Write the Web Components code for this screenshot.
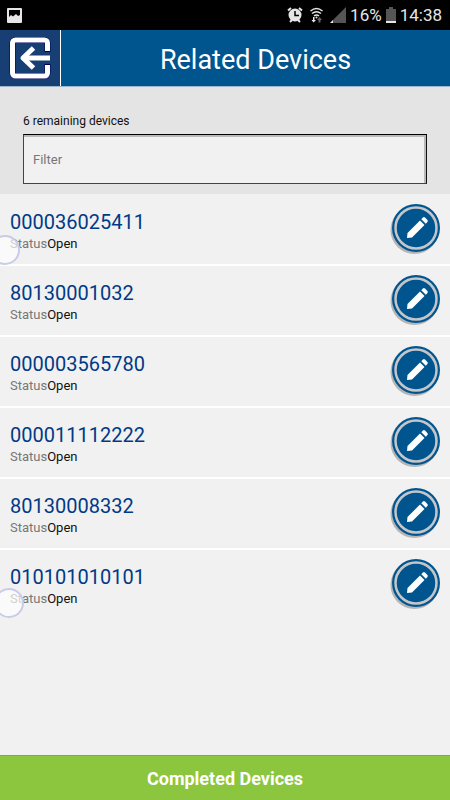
<!DOCTYPE html>
<html lang="en">
<head>
<meta charset="utf-8">
<meta name="viewport" content="width=device-width, initial-scale=1">
<title>Related Devices</title>
<style>
  body {
    margin: 0;
    font-family: Roboto, "Liberation Sans", sans-serif;
    background: #f1f1f1;
  }
</style>
</head>
<body>
<device-page>
  <status-bar slot="top" battery="16%" time="14:38"></status-bar>
  <page-header slot="top">Related Devices</page-header>
  <device-filter slot="top" label="6 remaining devices"></device-filter>
  <device-row status="Open" touch="near">000036025411</device-row>
  <device-row status="Open">80130001032</device-row>
  <device-row status="Open">000003565780</device-row>
  <device-row status="Open">000011112222</device-row>
  <device-row status="Open">80130008332</device-row>
  <device-row status="Open" touch="far">010101010101</device-row>
  <page-action slot="bottom">Completed Devices</page-action>
</device-page>

<script>
class BaseElement extends HTMLElement {
  constructor() {
    super();
    this.attachShadow({ mode: "open" });
  }

  connectedCallback() {
    this.shadowRoot.innerHTML = this.render();
  }
}

customElements.define("device-page", class extends BaseElement {
  render() {
    return `
<style>
  :host {
    display: flex;
    flex-direction: column;
    min-height: 100vh;
  }
  main {
    flex: 1;
    padding-top: 1px;
  }
</style>
<slot name="top"></slot>
<main><slot></slot></main>
<slot name="bottom"></slot>
`;
  }
});

customElements.define("status-bar", class extends BaseElement {
  render() {
    return `
<style>
  :host {
    display: flex;
    align-items: center;
    justify-content: space-between;
    height: 30px;
    padding: 0 8px 0 7px;
    background: #000;
    color: #e6e6e6;
    font-size: 17px;
    line-height: 30px;
  }
  .right {
    display: flex;
    align-items: center;
    gap: 4px;
  }
  svg {
    display: block;
  }
  .alarm, .wifi {
    margin-right: 3px;
  }
</style>
<svg width="15" height="15" viewBox="0 0 15 15">
  <path fill="#e6e6e6" fill-rule="evenodd" d="M1 0h13a1 1 0 0 1 1 1v13a1 1 0 0 1-1 1H1a1 1 0 0 1-1-1V1a1 1 0 0 1 1-1zM2 2v7l2-2 2 1.500 3-2.500 2 2 2-1V2z"/>
</svg>
<div class="right">
  <svg class="alarm" width="16" height="16" viewBox="0 0 16 16">
    <circle cx="8" cy="8" r="6.5" fill="#e6e6e6"/>
    <path d="M1 3.5 4 1M15 3.5 12 1M3 15l2-2M13 15l-2-2" stroke="#e6e6e6" stroke-width="2"/>
    <path d="M8 4v4.500h4" fill="none" stroke="#000" stroke-width="1.500"/>
  </svg>
  <svg class="wifi" width="13" height="16" viewBox="0 0 13 16">
    <path d="M.5 4Q6.500-1 12.500 4M2 6.500Q6.500 3 11 6.500M4 9Q6.500 7 9 9" fill="none" stroke="#e6e6e6" stroke-width="1.500"/>
    <path d="M3 10h1.500v3H6l-2.500 2.500L1.500 13H3z" fill="#e6e6e6"/>
    <path d="m9.500 10 2.500 3h-1.500v2.500h-2V13H7z" fill="#666"/>
    <circle cx="6.500" cy="10.500" r="1" fill="#e6e6e6"/>
  </svg>
  <svg width="16" height="16" viewBox="0 0 16 16">
    <path d="M16 0v16H0z" fill="#555"/>
    <path d="M3 13v3H0z" fill="#e6e6e6"/>
  </svg>
  <span>${this.getAttribute("battery")}</span>
  <svg width="10" height="16" viewBox="0 0 10 16">
    <path d="M3 0h4v2h3v14H0V2h3z" fill="#555"/>
    <path d="M0 14h10v2H0z" fill="#e6e6e6"/>
  </svg>
  <span>${this.getAttribute("time")}</span>
</div>
`;
  }
});

customElements.define("page-header", class extends BaseElement {
  render() {
    return `
<style>
  :host {
    display: flex;
    height: 56px;
    background: #00558f;
    border-bottom: 1px solid #9fb4cc;
    color: #fff;
  }
  button {
    width: 61px;
    padding: 0 1px 0 0;
    border: 0;
    border-right: 1px solid #fff;
    background: #173f73;
    display: flex;
    align-items: center;
    justify-content: center;
  }
  h1 {
    flex: 1;
    margin: 0;
    font-size: 27px;
    font-weight: 400;
    line-height: 60px;
    text-align: center;
  }
</style>
<button type="button" aria-label="Back">
  <svg width="42" height="42" viewBox="0 0 42 42" fill="none" stroke-linejoin="round">
    <path d="M38.500 15V6a3 3 0 0 0-3-3h-29a3 3 0 0 0-3 3v30a3 3 0 0 0 3 3h29a3 3 0 0 0 3-3v-9" stroke="#00005c" stroke-width="6"/>
    <path d="M38.500 14V6a3 3 0 0 0-3-3h-29a3 3 0 0 0-3 3v30a3 3 0 0 0 3 3h29a3 3 0 0 0 3-3v-8" stroke="#fff" stroke-width="5"/>
    <path d="M41 21H15" stroke="#fff" stroke-width="5"/>
    <path d="M24.500 11 14 21l10.500 10" stroke="#fff" stroke-width="5"/>
  </svg>
</button>
<h1><slot></slot></h1>
`;
  }
});

customElements.define("device-filter", class extends BaseElement {
  render() {
    return `
<style>
  :host {
    display: block;
    padding: 24px 23px 10px;
    background: #e4e4e4;
  }
  label {
    display: block;
    margin-bottom: 3px;
    font-size: 12px;
    line-height: 20px;
    color: #111;
  }
  input {
    display: block;
    box-sizing: border-box;
    width: 100%;
    height: 50px;
    padding: 0 9px;
    border: 1px solid #444;
    border-top-color: #000;
    border-right-color: #111;
    border-radius: 0;
    background: #f1f1f1;
    box-shadow: inset -2px 2px 0 #b9b9b9;
    font: 13px Roboto, "Liberation Sans", sans-serif;
  }
  input::placeholder {
    color: #777;
  }
</style>
<label for="filter">${this.getAttribute("label")}</label>
<input id="filter" type="text" placeholder="Filter">
`;
  }
});

customElements.define("edit-button", class extends BaseElement {
  render() {
    return `
<style>
  :host {
    display: block;
  }
  button {
    display: block;
    padding: 0;
    border: 0;
    background: none;
  }
  svg {
    display: block;
  }
</style>
<button type="button" aria-label="Edit">
  <svg width="51" height="51" viewBox="0 0 51 51">
    <circle cx="24.500" cy="26" r="24" fill="#b5b5b5"/>
    <circle cx="26" cy="24" r="24" fill="#00558f"/>
    <circle cx="26" cy="24" r="20.500" fill="none" stroke="#c4c6ca" stroke-width="2.500"/>
    <path d="M17.500 29 30 16.500l4.500 4.500L22 33.500l-5 .5z" fill="#fff"/>
    <path d="m31.300 15.200 1.600-1.600a1.500 1.500 0 0 1 2.100 0l2.400 2.400a1.500 1.500 0 0 1 0 2.100L35.800 19.700z" fill="#fff"/>
  </svg>
</button>
`;
  }
});

customElements.define("device-row", class extends BaseElement {
  render() {
    return `
<style>
  :host {
    display: flex;
    position: relative;
    align-items: center;
    justify-content: space-between;
    box-sizing: border-box;
    height: 71px;
    padding: 0 9px 0 10px;
    border-bottom: 2px solid #fff;
    color: #111;
  }
  :host(:last-of-type) {
    border-bottom-color: transparent;
  }
  .text {
    padding-top: 4px;
  }
  .id {
    font-size: 20px;
    line-height: 24px;
    color: #003a87;
  }
  .status {
    font-size: 13px;
    line-height: 20px;
  }
  .status span {
    color: #777;
  }
  /* ring left under a finger by the "show touches" option */
  .touch {
    position: absolute;
    top: 40px;
    left: -10px;
    width: 26px;
    height: 26px;
    border: 2px solid #c9cbe8;
    border-radius: 50%;
    background: rgba(255, 255, 255, .65);
  }
  :host([touch="far"]) .touch {
    top: 38px;
    left: -6px;
  }
</style>
<div class="text">
  <div class="id"><slot></slot></div>
  <div class="status"><span>Status</span>${this.getAttribute("status")}</div>
</div>
<edit-button></edit-button>
${this.hasAttribute("touch") ? `<div class="touch"></div>` : ""}
`;
  }
});

customElements.define("page-action", class extends BaseElement {
  render() {
    return `
<style>
  :host {
    display: block;
  }
  button {
    display: block;
    width: 100%;
    height: 45px;
    padding: 0;
    border: 0;
    border-top: 1px solid #74b522;
    background: #8cc63f;
    color: #fff;
    font: 700 18px Roboto, "Liberation Sans", sans-serif;
  }
</style>
<button type="button"><slot></slot></button>
`;
  }
});
</script>
</body>
</html>
